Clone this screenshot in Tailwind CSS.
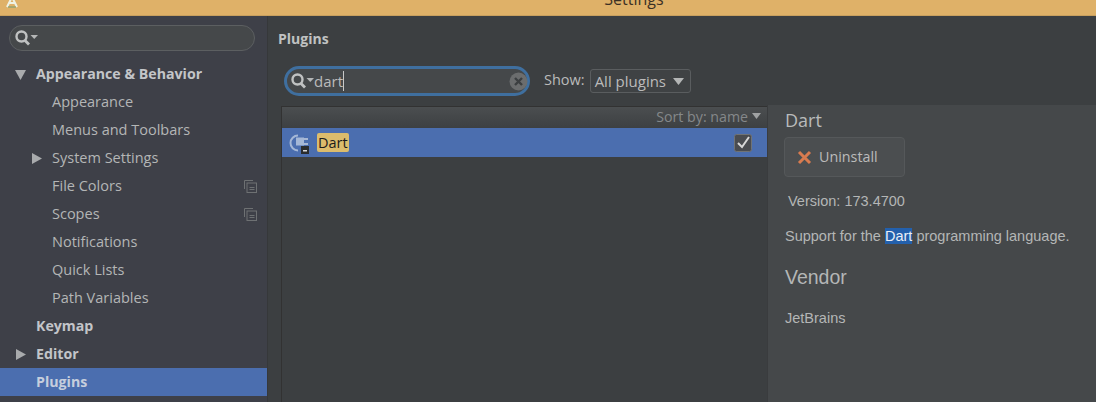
<!DOCTYPE html>
<html><head><meta charset="utf-8"><script src="https://cdn.jsdelivr.net/npm/@tailwindcss/browser@4"></script></head>
<body class="m-0 overflow-hidden bg-[#3c3f41]">
<div class="w-[1096px] h-[402px] flex flex-col overflow-hidden font-['Open_Sans','Noto_Sans',sans-serif] text-[#b4b6b6]">
  <header class="h-[16px] shrink-0 bg-[#dfb168] border-b border-[#c9a05e] relative overflow-hidden flex justify-center">
    <svg class="absolute left-[4px] top-[-4px]" width="16" height="12" viewBox="0 0 16 12" fill="none"><path d="M3 11 8 1l5 10M5 7h6" stroke="#eef2e4" stroke-width="2"/><path d="M4 11h8" stroke="#6f9c74" stroke-width="1"/></svg>
    <span class="text-[16px] leading-[20px] mt-[-11px] ml-[172px] text-[#3b3024]">Settings</span>
  </header>
  <div class="flex flex-1 min-h-0">
    <aside class="w-[268px] shrink-0 bg-[#3e4048] border-r border-[#36383a] flex flex-col">
      <div class="ml-[9px] w-[246px] mt-[9px] h-[26px] rounded-full border border-[#5c5f61] bg-[#45484a] flex items-center pl-[3px]">
        <svg width="28" height="20" viewBox="0 0 28 20" fill="none"><circle cx="8.500" cy="8.500" r="5" stroke="#c0c2c2" stroke-width="2.400"/><path d="M12 12.500l4 4" stroke="#c0c2c2" stroke-width="2.800"/><path d="M17.500 7h7.500l-3.750 4z" fill="#b4b6b6"/></svg>
      </div>
      <nav class="mt-[9px] text-[14.5px] flex flex-col">
        <div class="h-[28px] flex items-center font-bold text-[14.2px] text-[#c3c5c8]"><svg class="ml-[15px] mr-[10px]" width="11" height="11" viewBox="0 0 11 11"><path d="M0 1h11L5.500 11z" fill="#a9abad"/></svg>Appearance &amp; Behavior</div>
        <div class="h-[28px] flex items-center pl-[52px]">Appearance</div>
        <div class="h-[28px] flex items-center pl-[52px]">Menus and Toolbars</div>
        <div class="h-[28px] flex items-center pl-[32px]"><svg class="mr-[10px]" width="10" height="11" viewBox="0 0 10 11"><path d="M0 0l10 5.500L0 11z" fill="#a9abad"/></svg>System Settings</div>
        <div class="h-[28px] flex items-center pl-[52px] justify-between pr-[10px]">File Colors
          <svg width="13" height="13" viewBox="0 0 13 13" fill="none" stroke="#6e7173"><path d="M.5 9V.5H9"/><rect x="3" y="3" width="9.500" height="9.500"/><path d="M5.500 7.500h5M5.500 9.500h5"/></svg></div>
        <div class="h-[28px] flex items-center pl-[52px] justify-between pr-[10px]">Scopes
          <svg width="13" height="13" viewBox="0 0 13 13" fill="none" stroke="#6e7173"><path d="M.5 9V.5H9"/><rect x="3" y="3" width="9.500" height="9.500"/><path d="M5.500 7.500h5M5.500 9.500h5"/></svg></div>
        <div class="h-[28px] flex items-center pl-[52px]">Notifications</div>
        <div class="h-[28px] flex items-center pl-[52px]">Quick Lists</div>
        <div class="h-[28px] flex items-center pl-[52px]">Path Variables</div>
        <div class="h-[28px] flex items-center pl-[36px] font-bold text-[14.2px] text-[#c3c5c8]">Keymap</div>
        <div class="h-[28px] flex items-center font-bold text-[14.2px] text-[#c3c5c8]"><svg class="ml-[16px] mr-[10px]" width="10" height="11" viewBox="0 0 10 11"><path d="M0 0l10 5.500L0 11z" fill="#a9abad"/></svg>Editor</div>
        <div class="h-[28px] flex items-center pl-[36px] font-bold text-[14.2px] text-[#c6cedd] bg-[#4b6eaf]">Plugins</div>
      </nav>
    </aside>
    <main class="flex-1 min-w-0 flex flex-col">
      <h1 class="h-[46px] pl-[10px] pt-[13px] text-[14px] leading-[19px] font-bold text-[#c0c2c2]">Plugins</h1>
      <div class="h-[44px] flex items-start pl-[16px]">
        <div class="w-[246px] h-[30px] mt-[4px] rounded-full border-[3px] border-[#3f6f9f] bg-[#45484a] flex items-center pl-[2px] text-[15px] text-[#bbbbbb]">
          <svg class="shrink-0 mr-[-3px]" width="28" height="20" viewBox="0 0 28 20" fill="none"><circle cx="8.500" cy="8.500" r="5" stroke="#c0c2c2" stroke-width="2.400"/><path d="M12 12.500l4 4" stroke="#c0c2c2" stroke-width="2.800"/><path d="M17.500 7h7.500l-3.750 4z" fill="#b4b6b6"/></svg>
          <span class="border-r border-[#c8c8c8] leading-[20px]">dart</span>
          <svg class="ml-auto mr-[-1px]" width="19" height="19" viewBox="0 0 19 19"><circle cx="9.500" cy="9.500" r="9" fill="#6b6d6e"/><path d="M6 6l7 7M13 6l-7 7" stroke="#3c3f41" stroke-width="2.400"/></svg>
        </div>
        <span class="ml-[14px] mt-[8px] text-[14.500px] leading-[20px] text-[#bbbbbb]">Show:</span>
        <div class="ml-[5px] mt-[7px] w-[101px] h-[24px] rounded-[3px] border border-[#5a5d5f] flex items-center pl-[4px] text-[15px] text-[#bbbbbb] bg-[#3f4244]">All plugins
          <svg class="ml-[7px]" width="11" height="7" viewBox="0 0 11 7"><path d="M0 0h11L5.500 7z" fill="#b4b6b6"/></svg></div>
      </div>
      <div class="flex-1 min-h-0 flex">
        <section class="w-[486px] ml-[13px] shrink-0 border-l border-[#323232] flex flex-col">
          <div class="h-[22px] bg-gradient-to-b from-[#4b4e50] to-[#3d4042] border-t border-[#323232] flex items-center justify-end pr-[6px] text-[14.2px] text-[#85888a]"><span class="mt-[-2px]">Sort by: name</span>
            <svg class="ml-[4px] mt-[-3px]" width="9" height="6" viewBox="0 0 9 6"><path d="M0 0h9L4.500 6z" fill="#a0a2a3"/></svg></div>
          <div class="h-[29px] bg-[#4b6eaf] flex items-center pl-[7px] pr-[15px]">
            <svg width="22" height="22" viewBox="0 0 22 22" fill="none"><path d="M9 3.500a7.500 7.500 0 0 0 0 15" stroke="#a4b7d6" stroke-width="2"/><path d="M7 5.500h8v8H7z" fill="#a4b7d6"/><path d="M15 7h4M15 12h4" stroke="#c6d0e0" stroke-width="1.500"/><rect x="12" y="14" width="8" height="8" fill="#2a2c2e"/><rect x="14" y="18" width="4" height="1.500" fill="#d8d8d8"/></svg>
            <span class="ml-[6px] h-[19px] px-[1px] rounded-[2px] bg-[#dcbc6c] text-[#1b1b1b] text-[14.500px] leading-[19px]">Dart</span>
            <svg class="ml-auto" width="18" height="18" viewBox="0 0 18 18" fill="none"><rect x=".5" y=".5" width="17" height="17" rx="2" fill="#4a4c50" stroke="#707375"/><path d="M4 9l4 4 7-10" stroke="#d8d8d8" stroke-width="2"/></svg>
          </div>
        </section>
        <section class="flex-1 min-w-0 bg-[#45484a] mt-[-1px] border-l border-[#3a3c3e] pl-[17px] text-[#b4b6b6] font-['Liberation_Sans',Arial,sans-serif]">
          <h2 class="text-[18px] leading-[22px] mt-[4px] font-['Open_Sans',sans-serif] font-normal text-[#b9bbbb]">Dart</h2>
          <div class="w-[121px] h-[40px] mt-[6px] ml-[-1px] rounded-[4px] border border-[#55585a] bg-[#4b4e50] flex items-center pl-[12px] text-[14.3px] font-['Open_Sans',sans-serif] text-[#bbbbbb]">
            <svg class="mr-[7px]" width="15" height="15" viewBox="0 0 15 15"><path d="M2 2l11 11M13 2L2 13" stroke="#d97b4f" stroke-width="3"/></svg>Uninstall</div>
          <p class="text-[14.500px] leading-[18px] mt-[15px] ml-[3px]">Version: 173.4700</p>
          <p class="text-[14.500px] leading-[18px] mt-[17px]">Support for the <span class="bg-[#2360ac] text-[#e8eef6]">Dart</span> programming language.</p>
          <h3 class="text-[19.500px] leading-[24px] mt-[20px] text-[#b4b6b6]">Vendor</h3>
          <p class="text-[14.500px] leading-[18px] mt-[20px]">JetBrains</p>
        </section>
      </div>
    </main>
  </div>
</div>
</body></html>
